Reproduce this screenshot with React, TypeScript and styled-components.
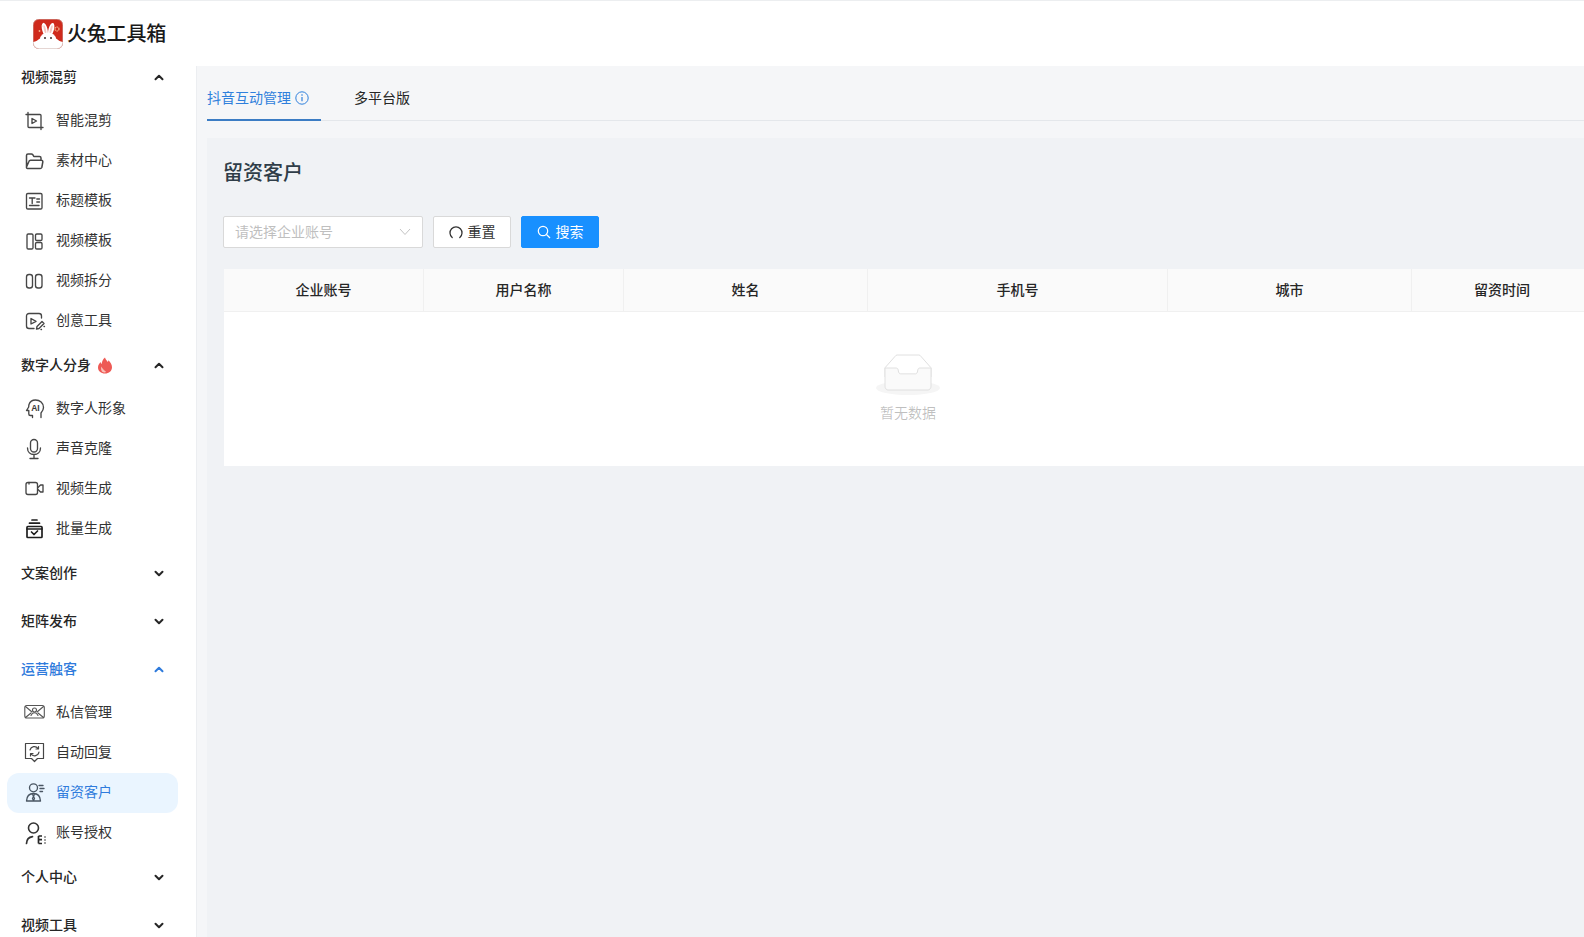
import { FC, ReactNode } from 'react';
import styled, { createGlobalStyle } from 'styled-components';

const GlobalStyle = createGlobalStyle`
  html, body {
    margin: 0;
    padding: 0;
    height: 100%;
    overflow: hidden;
    background: #f5f6f8;
    font-family: "Noto Sans CJK SC", "Noto Sans", sans-serif;
    font-size: 14px;
    color: #333;
  }
  * { box-sizing: border-box; }
`;

const Page = styled.div`
  width: 1584px;
  height: 937px;
  display: flex;
  flex-direction: column;
  overflow: hidden;
`;

const TopBar = styled.header`
  flex: 0 0 66px;
  display: flex;
  align-items: center;
  gap: 4px;
  padding-left: 33px;
  background: #fff;
  border-top: 1px solid #eceef0;
`;

const Brand = styled.span`
  padding-bottom: 2px;
  font-size: 20px;
  font-weight: 500;
  letter-spacing: -0.2px;
  color: #1a1a1a;
  line-height: 28px;
`;

const Body = styled.div`
  flex: 1;
  display: flex;
  min-height: 0;
`;

const Sidebar = styled.aside`
  flex: 0 0 197px;
  background: #fff;
  border-right: 1px solid #eceef1;
  overflow: hidden;
`;

// the menu is scrolled a little, so the first group sits under the top bar
const Menu = styled.nav`
  margin-top: -13px;
  padding: 0 18px 0 7px;
`;

const GroupRow = styled.div<{ $active?: boolean }>`
  height: 48px;
  display: flex;
  align-items: center;
  padding: 0 14px 0 15px;
  font-weight: 500;
  color: ${p => (p.$active ? '#2f7bdc' : '#262626')};
`;

const GroupLabel = styled.span`
  padding-bottom: 2px;
  margin-left: -1px;
`;

const GroupChevron = styled.svg`
  margin-left: auto;
  width: 10px;
  height: 7px;
`;

const FlameIcon = styled.svg`
  width: 16px;
  height: 17px;
  margin-left: 6px;
`;

const ItemRow = styled.div<{ $active?: boolean }>`
  height: 40px;
  display: flex;
  align-items: center;
  gap: 11px;
  padding-left: 17px;
  border-radius: 12px;
  background: ${p => (p.$active ? '#eaf5ff' : 'transparent')};
  color: ${p => (p.$active ? '#2f7bdc' : '#333')};
`;

const ItemLabel = styled.span`
  padding-bottom: 4px;
`;

const ItemIcon = styled.svg`
  flex: 0 0 21px;
  width: 21px;
  height: 21px;
  overflow: visible;
  fill: none;
  stroke: #464646;
  stroke-width: 1.35;
  stroke-linecap: round;
  stroke-linejoin: round;
`;

const Main = styled.main`
  flex: 1;
  min-width: 0;
  padding-left: 10px;
  display: flex;
  flex-direction: column;
  overflow: hidden;
`;

const TabBar = styled.div`
  flex: 0 0 55px;
  display: flex;
  gap: 33px;
  border-bottom: 1px solid #e4e7eb;
`;

const Tab = styled.div<{ $active?: boolean }>`
  display: flex;
  align-items: center;
  gap: 4px;
  height: 55px;
  padding-top: 8px;
  margin-bottom: -1px;
  color: ${p => (p.$active ? '#2f80dc' : '#262626')};
  border-bottom: 2px solid ${p => (p.$active ? '#3b7cc4' : 'transparent')};
`;

const InfoIcon = styled.svg`
  width: 14px;
  height: 14px;
  margin: 2px 12px 0 0;
`;

const Panel = styled.section`
  flex: 1;
  margin-top: 17px;
  padding: 20px 0 0 17px;
  background: #f0f2f5;
`;

const Title = styled.h2`
  margin: 0 0 0 -1px;
  font-size: 20px;
  font-weight: 500;
  line-height: 28px;
  color: #2f3d48;
`;

const FilterRow = styled.div`
  display: flex;
  gap: 10px;
  margin-top: 30px;
  margin-left: -1px;
`;

const SelectBox = styled.div`
  width: 200px;
  height: 32px;
  display: flex;
  align-items: center;
  justify-content: space-between;
  padding: 0 11px;
  background: #fff;
  border: 1px solid #d9d9d9;
  border-radius: 2px;
  color: #bfbfbf;
`;

const SelectText = styled.span`
  padding-bottom: 2px;
`;

const Button = styled.button<{ $primary?: boolean }>`
  width: 78px;
  height: 32px;
  display: flex;
  align-items: center;
  justify-content: center;
  gap: 5px;
  padding: 0;
  font: inherit;
  color: ${p => (p.$primary ? '#fff' : '#333')};
  background: ${p => (p.$primary ? '#1890ff' : '#fff')};
  border: 1px solid ${p => (p.$primary ? '#1890ff' : '#d9d9d9')};
  border-radius: 2px;
`;

const ButtonText = styled.span`
  padding-bottom: 2px;
`;

const Table = styled.div`
  width: 1368px;
  margin-top: 21px;
  background: #fff;
`;

const HeadRow = styled.div`
  display: grid;
  grid-template-columns: 200px 200px 244px 300px 244px 180px;
  height: 43px;
  background: #fafafa;
  border-bottom: 1px solid #f0f0f0;
`;

const HeadCell = styled.div`
  display: flex;
  align-items: center;
  justify-content: center;
  padding-bottom: 3px;
  font-weight: 500;
  color: #262626;
  border-right: 1px solid #f0f0f0;

  &:last-child {
    border-right: none;
  }
`;

const EmptyArea = styled.div`
  height: 154px;
  display: flex;
  flex-direction: column;
  align-items: center;
  padding-top: 42px;
`;

const EmptyText = styled.div`
  margin-top: 6px;
  line-height: 22px;
  color: rgba(0, 0, 0, 0.25);
`;

const Logo: FC = () => (
  <svg width="30" height="30" viewBox="0 0 30 30">
    <rect width="30" height="30" rx="6" fill="#cf2a1c" />
    <path d="M0 23c3-.5 5-2 7-3.500h16c2 1.500 4 3 7 3.500v1a6 6 0 0 1-6 6H6a6 6 0 0 1-6-6z" fill="#fff" />
    <ellipse cx="11.800" cy="10.500" rx="2.700" ry="6.800" transform="rotate(-14 11.800 10.500)" fill="#fff" />
    <ellipse cx="18.200" cy="10.500" rx="2.700" ry="6.800" transform="rotate(16 18.200 10.500)" fill="#fff" />
    <ellipse cx="11.900" cy="10.500" rx="1" ry="4.300" transform="rotate(-14 11.900 10.500)" fill="#f6c6bf" />
    <ellipse cx="18.100" cy="10.500" rx="1" ry="4.300" transform="rotate(16 18.100 10.500)" fill="#f6c6bf" />
    <ellipse cx="15" cy="20" rx="8" ry="6.500" fill="#fff" />
    <circle cx="12" cy="19" r="1" fill="#3a2a2a" />
    <circle cx="18" cy="19" r="1" fill="#3a2a2a" />
    <circle cx="24" cy="10" r="2" fill="none" stroke="#f3b38a" strokeWidth="1.200" strokeDasharray="1.400 .6" />
    <circle cx="6.500" cy="12" r=".9" fill="#f3b38a" />
    <circle cx="9" cy="7" r=".6" fill="#f3b38a" />
    <rect x=".3" y=".3" width="29.400" height="29.400" rx="5.800" fill="none" stroke="#c9a9a4" strokeWidth=".6" />
  </svg>
);

const Chevron: FC<{ up?: boolean; color?: string }> = ({ up, color = '#262626' }) => (
  <GroupChevron viewBox="0 0 10 7">
    <path d={up ? 'M1.500 5.300 5 1.800l3.500 3.500' : 'M1.500 1.700 5 5.200l3.500-3.500'} fill="none" stroke={color} strokeWidth="2" strokeLinecap="round" strokeLinejoin="round" />
  </GroupChevron>
);

const Flame: FC = () => (
  <FlameIcon viewBox="0 0 16 17">
    <path d="M8 .5c.6 2.300 2 3 2.800 4.500.4-.6.500-1.200.5-1.800C13.500 5 15 7.500 15 10.200 15 14 12 16.500 8 16.500S1 14 1 10.500c0-2.500 1.300-4 2.500-5.500.2 1 .6 1.600 1.200 2C4.800 4.500 6 2 8 .5z" fill="#ee5a55" />
    <path d="M4.500 9.500c-.8 1.800-.6 4 1 5.500 1.500.8 3.700.4 3.300-.6C7 13.500 5.200 11.500 4.500 9.500z" fill="#f9c0b8" />
  </FlameIcon>
);

const icons: Record<string, ReactNode> = {
  mix: (
    <>
      <path d="M4 1.500V15.500a1 1 0 0 0 1 1H19M2 3.500h14a1 1 0 0 1 1 1V18.500" />
      <path d="M8 7.500l4.500 2.500L8 12.500z" />
    </>
  ),
  folder: (
    <path
      strokeWidth="1.500"
      d="M2.500 16V4.500A1.500 1.500 0 0 1 4 3h3.500c.6 0 1 .3 1.300.7L9.800 5.500h5.700a1.500 1.500 0 0 1 1.500 1.500v1.500M3.500 17.500h12.800c.7 0 1.200-.4 1.500-1l1-5.500c.2-1-.5-1.800-1.400-1.800H6.500c-.7 0-1.300.5-1.500 1.100L2.500 16c-.2.800.3 1.500 1 1.500z"
    />
  ),
  title: (
    <>
      <rect x="2.500" y="2.500" width="15.500" height="15.500" rx="1.300" />
      <path d="M5.500 7h5.500M8.200 7v5.500M5.500 14.500h9.500M12.800 8h2.700M12.800 11h2.700" />
    </>
  ),
  layout: (
    <>
      <rect x="3" y="3" width="6" height="15" rx="1.300" />
      <rect x="11.500" y="3" width="6.500" height="6.500" rx="1.300" />
      <rect x="11.500" y="11.500" width="6.500" height="6.500" rx="1.300" />
    </>
  ),
  split: (
    <>
      <rect x="2.500" y="3.500" width="6" height="13.500" rx="2.500" />
      <rect x="11.500" y="3.500" width="6.500" height="13.500" rx="2.500" />
    </>
  ),
  creative: (
    <>
      <path d="M17.500 7V5a2.500 2.500 0 0 0-2.500-2.500H5A2.500 2.500 0 0 0 2.500 5v10A2.500 2.500 0 0 0 5 17.500h5" />
      <path d="M7 7.500l5 2.800-5 2.700z" />
      <path d="M12.500 18l.5-2.500 5-5 2 2-5 5zM17 18.500h.5M20 15.500h.5" />
    </>
  ),
  head: (
    <>
      <path d="M5 5.500C6 2.500 8.500 1 11.500 1 15.800 1 19.500 4 19.500 8.500c0 2.500-1.200 4-2.500 5.500v4.500M5 5.500c-.3 1-.3 2-.3 2.500L2.500 11.500h2.300V15c0 1 .7 1.500 1.500 1.500H8.500v2" />
      <text x="7.200" y="12" fontSize="8.500" fontWeight="700" fontFamily="Liberation Sans, sans-serif" stroke="none" fill="#3a3a3a">AI</text>
    </>
  ),
  mic: (
    <>
      <rect x="6.500" y="0.500" width="7" height="12.500" rx="3.500" />
      <path d="M3.500 9c0 4 2.800 6.500 6.500 6.500s6.500-2.500 6.500-6.500M10 15.500V19.500M6 19.500h8" />
    </>
  ),
  video: (
    <>
      <rect x="2" y="3.500" width="11.500" height="12" rx="2" />
      <path d="M5 3.500v1.500M14 8.500l2.500-2.500H19v7h-2.500L14 10.500" />
    </>
  ),
  batch: (
    <g strokeWidth="1.700" stroke="#1f1f1f">
      <path d="M8 1h5M5.500 4.200h10" />
      <rect x="3" y="7.500" width="15" height="11" rx=".8" />
      <path d="M3 10h15M7.500 13l2.500 2.500 3.500-3.500" />
    </g>
  ),
  mail: (
    <g strokeWidth="1.100" stroke="#555">
      <rect x=".8" y="2.500" width="19.500" height="12.500" rx="2" />
      <path d="M1.500 3.500l6.500 5.500M19.500 3.500L13 9M1.500 14.500L7 10M19.500 14.500L14 10" />
      <circle cx="10.500" cy="7" r="2" />
      <path d="M7 12.500c.8-1.800 2-2.800 3.500-2.800s2.700 1 3.500 2.800" />
    </g>
  ),
  reply: (
    <g strokeWidth="1.200">
      <path d="M1.500 .5h18v15h-6l-3 3-3-3h-6z" />
      <path d="M6 7a4.500 4.500 0 0 1 8-1.500M15 9a4.500 4.500 0 0 1-8 2M14.500 3.500V6h-2.500M6.500 13v-2.300h2.500" />
    </g>
  ),
  customer: (
    <g stroke="#4a5663">
      <circle cx="9.500" cy="4.800" r="4" />
      <path d="M2.500 18c.3-4.800 3-7.500 7-7.500s6.700 2.700 7 7.500zM8.500 11l1 2.500 1-2.500M9.500 13.500l-1 2 1 2 1-2zM15 2.500h4M16 5.500h4M16 8.500h2.500" />
    </g>
  ),
  account: (
    <>
      <circle cx="9.500" cy="5" r="5" strokeWidth="1.600" stroke="#333" />
      <path d="M2.500 20.500c.2-3.800 2.500-6.300 6-6.800" strokeWidth="1.700" stroke="#333" />
      <path d="M14.500 13v7.500M14.500 13h3.500M14.500 16.700h3.500M14.500 20.500h3.500M21 13.500v1M21 16.500v1M21 19.500v1" strokeWidth="1.700" stroke="#262626" strokeLinecap="butt" />
    </>
  ),
};

type Item = { label: string; icon: string; active?: boolean };
type Group = { label: string; open?: boolean; active?: boolean; hot?: boolean; items?: Item[] };

const groups: Group[] = [
  {
    label: '视频混剪',
    open: true,
    items: [
      { label: '智能混剪', icon: 'mix' },
      { label: '素材中心', icon: 'folder' },
      { label: '标题模板', icon: 'title' },
      { label: '视频模板', icon: 'layout' },
      { label: '视频拆分', icon: 'split' },
      { label: '创意工具', icon: 'creative' },
    ],
  },
  {
    label: '数字人分身',
    open: true,
    hot: true,
    items: [
      { label: '数字人形象', icon: 'head' },
      { label: '声音克隆', icon: 'mic' },
      { label: '视频生成', icon: 'video' },
      { label: '批量生成', icon: 'batch' },
    ],
  },
  { label: '文案创作' },
  { label: '矩阵发布' },
  {
    label: '运营触客',
    open: true,
    active: true,
    items: [
      { label: '私信管理', icon: 'mail' },
      { label: '自动回复', icon: 'reply' },
      { label: '留资客户', icon: 'customer', active: true },
      { label: '账号授权', icon: 'account' },
    ],
  },
  { label: '个人中心' },
  { label: '视频工具' },
];

const columns = ['企业账号', '用户名称', '姓名', '手机号', '城市', '留资时间'];

const App: FC = () => {
  return (
    <Page>
      <GlobalStyle />
      <TopBar>
        <Logo />
        <Brand>火兔工具箱</Brand>
      </TopBar>
      <Body>
        <Sidebar>
          <Menu>
            {groups.map(group => (
              <div key={group.label}>
                <GroupRow $active={group.active}>
                  <GroupLabel>{group.label}</GroupLabel>
                  {group.hot && <Flame />}
                  <Chevron up={group.open} color={group.active ? '#2f7bdc' : '#262626'} />
                </GroupRow>
                {group.items?.map(item => (
                  <ItemRow key={item.label} $active={item.active}>
                    <ItemIcon viewBox="0 0 21 21">{icons[item.icon]}</ItemIcon>
                    <ItemLabel>{item.label}</ItemLabel>
                  </ItemRow>
                ))}
              </div>
            ))}
          </Menu>
        </Sidebar>
        <Main>
          <TabBar>
            <Tab $active>
              抖音互动管理
              <InfoIcon viewBox="0 0 14 14">
                <circle cx="7" cy="7" r="6.200" fill="none" stroke="#2f80dc" />
                <path d="M7 6v4.200" stroke="#2f80dc" strokeWidth="1.200" />
                <circle cx="7" cy="4" r=".8" fill="#2f80dc" />
              </InfoIcon>
            </Tab>
            <Tab>多平台版</Tab>
          </TabBar>
          <Panel>
            <Title>留资客户</Title>
            <FilterRow>
              <SelectBox>
                <SelectText>请选择企业账号</SelectText>
                <svg width="12" height="8" viewBox="0 0 12 8">
                  <path d="M1 1l5 5.500L11 1" fill="none" stroke="#c4c4c4" />
                </svg>
              </SelectBox>
              <Button>
                <svg width="14" height="14" viewBox="0 0 14 14">
                  <path d="M3.200 12.500A6 6 0 1 1 10.800 12.500" fill="none" stroke="#333" strokeWidth="1.300" strokeLinecap="round" />
                </svg>
                <ButtonText>重置</ButtonText>
              </Button>
              <Button $primary>
                <svg width="14" height="14" viewBox="0 0 14 14">
                  <circle cx="6" cy="6" r="4.700" fill="none" stroke="#fff" strokeWidth="1.200" />
                  <path d="M9.500 9.500l3.500 3.500" stroke="#fff" strokeWidth="1.200" />
                </svg>
                <ButtonText>搜索</ButtonText>
              </Button>
            </FilterRow>
            <Table>
              <HeadRow>
                {columns.map(col => (
                  <HeadCell key={col}>{col}</HeadCell>
                ))}
              </HeadRow>
              <EmptyArea>
                <svg width="64" height="41" viewBox="0 0 64 41">
                  <g transform="translate(0 1)" fill="none" fillRule="evenodd">
                    <ellipse fill="#f5f5f5" cx="32" cy="33" rx="32" ry="7" />
                    <g fillRule="nonzero" stroke="#e0e0e0">
                      <path d="M55 12.760L44.854 1.258C44.367.474 43.656 0 42.907 0H21.093c-.749 0-1.460.474-1.947 1.257L9 12.761V22h46v-9.240z" />
                      <path d="M41.613 15.931c0-1.605.994-2.930 2.227-2.931H55v18.137C55 33.260 53.680 35 52.050 35h-40.100C10.320 35 9 33.259 9 31.137V13h11.160c1.233 0 2.227 1.323 2.227 2.928v.022c0 1.605 1.005 2.901 2.237 2.901h14.752c1.232 0 2.237-1.308 2.237-2.913v-.007z" fill="#fafafa" />
                    </g>
                  </g>
                </svg>
                <EmptyText>暂无数据</EmptyText>
              </EmptyArea>
            </Table>
          </Panel>
        </Main>
      </Body>
    </Page>
  );
};

export default App;
